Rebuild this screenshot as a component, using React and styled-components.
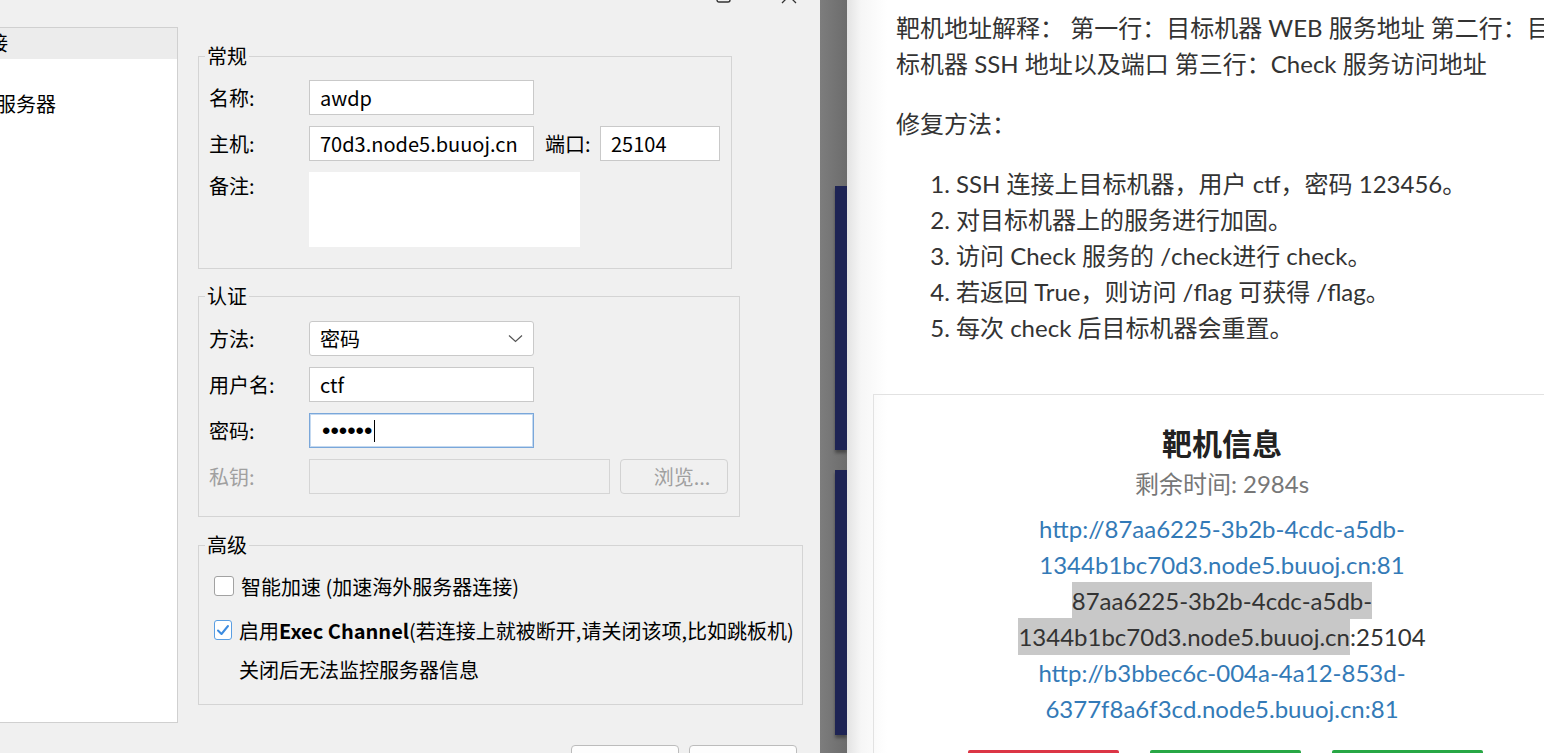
import React from "react";
import styled, { createGlobalStyle } from "styled-components";

const GlobalStyle = createGlobalStyle`
  html, body {
    margin: 0;
    padding: 0;
    background: #fff;
    overflow: hidden;
  }
`;

const Screen = styled.div`
  display: flex;
  width: 1544px;
  height: 753px;
  overflow: hidden;
`;

/* ---------- SSH connection dialog ---------- */

const Dialog = styled.div`
  flex: 0 0 860px;
  margin-left: -40px;
  display: flex;
  flex-direction: column;
  background: #f0f0f0;
  font-family: "Noto Sans CJK SC", "Noto Sans", sans-serif;
  font-size: 20px;
  color: #000;
`;

const TitleBar = styled.div`
  height: 27px;
  flex: 0 0 27px;
  display: flex;
  justify-content: flex-end;
  align-items: flex-start;
  gap: 50px;
  padding-right: 23px;
  overflow: hidden;
  svg {
    margin-top: -12px;
  }
`;

const Body = styled.div`
  display: flex;
  gap: 20px;
  flex: 1;
`;

const ConnList = styled.div`
  width: 218px;
  height: 696px;
  box-sizing: border-box;
  background: #fff;
  border: 1px solid #d0d0d0;
  border-left: none;
`;

const ConnItem = styled.div`
  height: 30.5px;
  line-height: 30.5px;
  padding-left: ${(p) => p.$indent}px;
  background: ${(p) => (p.$active ? "#ececec" : "transparent")};
  white-space: nowrap;
`;

const Main = styled.div`
  flex: 1;
  display: flex;
  flex-direction: column;
`;

const Group = styled.fieldset`
  width: ${(p) => p.$w}px;
  box-sizing: border-box;
  margin: ${(p) => p.$mt}px 0 0 0;
  padding: ${(p) => p.$pt}px 10px ${(p) => p.$pb}px 10px;
  border: 1px solid #d4d4d4;
  min-inline-size: 0;
`;

const Legend = styled.legend`
  margin-left: -4px;
  padding: 0 2px;
  line-height: 24px;
`;

const Fields = styled.div`
  display: grid;
  grid-template-columns: 100px auto;
  row-gap: 11px;
  align-items: start;
`;

const Label = styled.div`
  line-height: ${(p) => (p.$top ? "28px" : "35px")};
  color: ${(p) => (p.$disabled ? "#a0a0a0" : "#000")};
`;

const Inline = styled.div`
  display: flex;
  align-items: center;
`;

const Field = styled.div`
  width: ${(p) => p.$w}px;
  height: ${(p) => p.$h || 35}px;
  box-sizing: border-box;
  display: flex;
  align-items: center;
  justify-content: space-between;
  padding: 0 10px;
  background: ${(p) => (p.$disabled ? "#f0f0f0" : "#fff")};
  border: 1px solid
    ${(p) =>
      p.$focus ? "#7aa7da" : p.$bare ? "#fff" : p.$disabled ? "#d5d5d5" : "#c9c9c9"};
  box-shadow: ${(p) => (p.$focus ? "inset 0 0 0 1px #c4d9f0" : "none")};
  border-radius: ${(p) => (p.$round ? "3px" : "0")};
  white-space: nowrap;
`;

const PortLabel = styled.div`
  width: 55px;
  margin-left: 11px;
`;

const Dots = styled.span`
  display: inline-flex;
  align-items: center;
  margin-left: 2px;
  font-family: "Liberation Sans", sans-serif;
  font-size: 24px;
  line-height: 1;
  &::after {
    content: "";
    width: 1px;
    height: 22px;
    margin-left: 2px;
    background: #000;
  }
`;

const PlainButton = styled.div`
  width: 108px;
  height: 35px;
  box-sizing: border-box;
  margin-left: ${(p) => p.$ml || 0}px;
  display: flex;
  align-items: center;
  justify-content: center;
  padding-left: 16px;
  border: 1px solid ${(p) => (p.$disabled ? "#d2d2d2" : "#bcbcbc")};
  border-radius: 4px;
  background: ${(p) => (p.$disabled ? "#f0f0f0" : "#fdfdfd")};
  color: ${(p) => (p.$disabled ? "#a0a0a0" : "#000")};
`;

const CheckRow = styled.div`
  display: flex;
  align-items: center;
  height: 28px;
  margin-top: ${(p) => p.$mt || 0}px;
  padding-left: ${(p) => p.$indent || 0}px;
  white-space: nowrap;
`;

const Box = styled.span`
  width: 20px;
  height: 20px;
  box-sizing: border-box;
  margin: 0 7px 0 5px;
  display: inline-flex;
  align-items: center;
  justify-content: center;
  border: 1px solid ${(p) => (p.$checked ? "#5a9ee2" : "#a2a2a2")};
  border-radius: 3px;
  background: #fff;
`;

const Strong = styled.span`
  font-weight: 600;
`;

const Footer = styled.div`
  display: flex;
  justify-content: flex-end;
  gap: 10px;
  padding-right: 23px;
  margin-top: 40px;
`;

/* ---------- divider with the page sidebar behind the dialog ---------- */

const Strip = styled.div`
  flex: 0 0 27px;
  display: flex;
  flex-direction: column;
  align-items: flex-end;
  background: linear-gradient(90deg, #7d7d7d, #6c6c6c);
`;

const NavBlock = styled.div`
  width: 12px;
  height: ${(p) => p.$h}px;
  margin-top: ${(p) => p.$mt}px;
  background: #1e2454;
  box-shadow: 0 3px 3px rgba(0, 0, 0, 0.35);
`;

/* ---------- challenge page ---------- */

const Page = styled.div`
  flex: 1;
  overflow: hidden;
  padding: 10px 0 0 49px;
  background: linear-gradient(90deg, #e3e3e3 0, #f6f6f6 14px, #fff 40px);
  font-family: Lato, "Noto Sans CJK SC", sans-serif;
  font-size: 24px;
  line-height: 36px;
  color: #333;
`;

const Para = styled.p`
  margin: ${(p) => p.$mt || 0}px 0 0 0;
  white-space: nowrap;
`;

const Steps = styled.ol`
  margin: 24px 0 0 0;
  padding-left: 60px;
  white-space: nowrap;
`;

const Card = styled.div`
  width: 698px;
  box-sizing: border-box;
  margin: 48px 0 0 -23px;
  padding-top: 28px;
  border: 1px solid #e2e2e2;
  text-align: center;
`;

const CardTitle = styled.h3`
  margin: 0;
  font-size: 30px;
  line-height: 40px;
  font-weight: 700;
  color: #222;
`;

const TimeLeft = styled.div`
  margin-top: 6px;
  line-height: 30px;
  color: #777;
`;

const Addresses = styled.div`
  margin-top: 12px;
`;

const Link = styled.a`
  display: block;
  color: #337ab7;
  text-decoration: none;
`;

const Plain = styled.div`
  color: #333;
`;

const Selected = styled.span`
  background: #c8c8c8;
  padding: 3.6px 0;
  -webkit-box-decoration-break: clone;
  box-decoration-break: clone;
`;

const Actions = styled.div`
  display: flex;
  justify-content: center;
  gap: 31px;
  margin: 23px 0 0 6px;
`;

const ActionButton = styled.button`
  width: 151px;
  height: 40px;
  border: none;
  border-radius: 2px 2px 0 0;
  background: ${(p) => p.$color};
`;

const Chevron = () => (
  <svg width="15" height="9" viewBox="0 0 15 9">
    <path d="M1 1.5 L7.5 7.5 L14 1.5" fill="none" stroke="#555" strokeWidth="1.2" />
  </svg>
);

const Tick = () => (
  <svg width="16" height="16" viewBox="0 0 16 16">
    <path d="M3 8.5 L6.5 12 L13 4" fill="none" stroke="#3d8ce0" strokeWidth="2" strokeLinecap="round" strokeLinejoin="round" />
  </svg>
);

const MaxIcon = () => (
  <svg width="15" height="15" viewBox="0 0 15 15">
    <rect x="1" y="1" width="13" height="13" rx="2" fill="none" stroke="#333" strokeWidth="1.4" />
  </svg>
);

const CloseIcon = () => (
  <svg width="16" height="16" viewBox="0 0 16 16">
    <path d="M1 1 L15 15 M15 1 L1 15" stroke="#333" strokeWidth="1.3" />
  </svg>
);

export default function App() {
  return (
    <>
      <GlobalStyle />
      <Screen>
        <Dialog>
          <TitleBar>
            <MaxIcon />
            <CloseIcon />
          </TitleBar>
          <Body>
            <ConnList>
              <ConnItem $indent={8} $active>连接</ConnItem>
              <ConnItem $indent={8} />
              <ConnItem $indent={36}>服务器</ConnItem>
            </ConnList>
            <Main>
              <Group $w={534} $mt={17} $pt={12} $pb={21}>
                <Legend>常规</Legend>
                <Fields>
                  <Label>名称:</Label>
                  <Field $w={225}>awdp</Field>
                  <Label>主机:</Label>
                  <Inline>
                    <Field $w={225}>70d3.node5.buuoj.cn</Field>
                    <PortLabel>端口:</PortLabel>
                    <Field $w={120}>25104</Field>
                  </Inline>
                  <Label $top>备注:</Label>
                  <Field $w={271} $h={75} $bare />
                </Fields>
              </Group>

              <Group $w={542} $mt={15} $pt={13} $pb={22}>
                <Legend>认证</Legend>
                <Fields>
                  <Label>方法:</Label>
                  <Field $w={225} $round>
                    密码
                    <Chevron />
                  </Field>
                  <Label>用户名:</Label>
                  <Field $w={225}>ctf</Field>
                  <Label>密码:</Label>
                  <Field $w={225} $focus>
                    <Dots>••••••</Dots>
                  </Field>
                  <Label $disabled>私钥:</Label>
                  <Inline>
                    <Field $w={301} $disabled />
                    <PlainButton $ml={10} $disabled>浏览...</PlainButton>
                  </Inline>
                </Fields>
              </Group>

              <Group $w={605} $mt={16} $pt={15} $pb={21}>
                <Legend>高级</Legend>
                <CheckRow>
                  <Box />
                  智能加速 (加速海外服务器连接)
                </CheckRow>
                <CheckRow $mt={16}>
                  <Box $checked>
                    <Tick />
                  </Box>
                  启用<Strong>Exec Channel</Strong>(若连接上就被断开,请关闭该项,比如跳板机)
                </CheckRow>
                <CheckRow $mt={11} $indent={30}>
                  关闭后无法监控服务器信息
                </CheckRow>
              </Group>

              {/* OK / Cancel, only their top edges fit on screen */}
              <Footer>
                <PlainButton />
                <PlainButton />
              </Footer>
            </Main>
          </Body>
        </Dialog>

        <Strip>
          <NavBlock $mt={186} $h={264} />
          <NavBlock $mt={20} $h={265} />
        </Strip>

        <Page>
          <Para>
            靶机地址解释： 第一行：目标机器 WEB 服务地址 第二行：目
            <br />
            标机器 SSH 地址以及端口 第三行：Check 服务访问地址
          </Para>
          <Para $mt={24}>修复方法：</Para>
          <Steps>
            <li>SSH 连接上目标机器，用户 ctf，密码 123456。</li>
            <li>对目标机器上的服务进行加固。</li>
            <li>访问 Check 服务的 /check进行 check。</li>
            <li>若返回 True，则访问 /flag 可获得 /flag。</li>
            <li>每次 check 后目标机器会重置。</li>
          </Steps>

          <Card>
            <CardTitle>靶机信息</CardTitle>
            <TimeLeft>剩余时间: 2984s</TimeLeft>
            <Addresses>
              <Link href="#">
                http://87aa6225-3b2b-4cdc-a5db-
                <br />
                1344b1bc70d3.node5.buuoj.cn:81
              </Link>
              <Plain>
                <Selected>
                  87aa6225-3b2b-4cdc-a5db-
                  <br />
                  1344b1bc70d3.node5.buuoj.cn
                </Selected>
                :25104
              </Plain>
              <Link href="#">
                http://b3bbec6c-004a-4a12-853d-
                <br />
                6377f8a6f3cd.node5.buuoj.cn:81
              </Link>
            </Addresses>
            <Actions>
              <ActionButton $color="#dc3545" />
              <ActionButton $color="#28a745" />
              <ActionButton $color="#28a745" />
            </Actions>
          </Card>
        </Page>
      </Screen>
    </>
  );
}
